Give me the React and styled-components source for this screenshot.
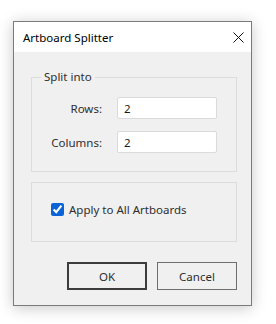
import React from 'react';
import styled, { createGlobalStyle } from 'styled-components';

const GlobalStyle = createGlobalStyle`
  body {
    margin: 0;
    background: #ffffff;
    font-family: "Noto Sans", "Liberation Sans", sans-serif;
    font-size: 11.5px;
    color: #1a1a1a;
  }
`

const Page = styled.div`
  width: 276px;
  height: 324px;
  padding: 21px 0 0 13px;
  box-sizing: border-box;
`

const Window = styled.div`
  width: 239px;
  height: 285px;
  box-sizing: border-box;
  border: 1px solid #7a7a7a;
  background: #f0f0f0;
  box-shadow: 0 2px 14px rgba(0, 0, 0, 0.22);
  display: flex;
  flex-direction: column;
`

const TitleBar = styled.div`
  height: 30px;
  background: #ffffff;
  display: flex;
  align-items: center;
  justify-content: space-between;
  padding-left: 9px;
`

const Title = styled.span`
  color: #000;
`

const CloseButton = styled.div`
  width: 25px;
  height: 30px;
  display: flex;
  align-items: center;
  justify-content: center;
`

const Body = styled.div`
  flex: 1;
  display: flex;
  flex-direction: column;
  padding: 17px 14px 15px 17px;
`

const Group = styled.fieldset`
  margin: 0;
  padding: 12px 0 18px 0;
  border: 1px solid #dcdcdc;
  border-radius: 0;
`

const Legend = styled.legend`
  margin-left: 9px;
  padding: 0 3px;
  line-height: 16px;
  color: #2e2e2e;
`

const FieldGrid = styled.div`
  display: grid;
  grid-template-columns: 70px 100px;
  column-gap: 15px;
  row-gap: 12px;
  align-items: center;
`

const Label = styled.label`
  justify-self: end;
  color: #2e2e2e;
`

const TextInput = styled.input`
  box-sizing: border-box;
  width: 100px;
  height: 22px;
  border: 1px solid #dadada;
  border-radius: 2px;
  background: #fff;
  padding: 0 6px;
  font: inherit;
  color: #1a1a1a;
  outline: none;
`

const OptionBox = styled.div`
  margin-top: 10px;
  height: 60px;
  box-sizing: border-box;
  border: 1px solid #dcdcdc;
  display: flex;
  align-items: center;
  padding: 0 0 6px 19px;
  gap: 5px;
`

const Check = styled.input`
  width: 13px;
  height: 13px;
  margin: 0;
  accent-color: #0a64d8;
`

const CheckLabel = styled.span`
  color: #2e2e2e;
`

const ButtonRow = styled.div`
  margin-top: auto;
  display: flex;
  justify-content: flex-end;
  gap: 10px;
`

const Button = styled.button`
  width: 80px;
  height: 28px;
  box-sizing: border-box;
  background: #f0f0f0;
  border: ${p => (p.$primary ? '2px solid #3c3c3c' : '1px solid #6e6e6e')};
  font: inherit;
  color: #2e2e2e;
  padding: 0;
`

export default function App() {
  return (
    <Page>
      <GlobalStyle />
      <Window>
        <TitleBar>
          <Title>Artboard Splitter</Title>
          <CloseButton>
            <svg width="11" height="11" viewBox="0 0 11 11">
              <path d="M0.5 0.5 L10.5 10.5 M10.5 0.5 L0.5 10.5" stroke="#111" strokeWidth="1" fill="none" />
            </svg>
          </CloseButton>
        </TitleBar>
        <Body>
          <Group>
            <Legend>Split into</Legend>
            <FieldGrid>
              <Label>Rows:</Label>
              <TextInput defaultValue="2" />
              <Label>Columns:</Label>
              <TextInput defaultValue="2" />
            </FieldGrid>
          </Group>
          <OptionBox>
            <Check type="checkbox" defaultChecked />
            <CheckLabel>Apply to All Artboards</CheckLabel>
          </OptionBox>
          <ButtonRow>
            <Button $primary>OK</Button>
            <Button>Cancel</Button>
          </ButtonRow>
        </Body>
      </Window>
    </Page>
  );
}
